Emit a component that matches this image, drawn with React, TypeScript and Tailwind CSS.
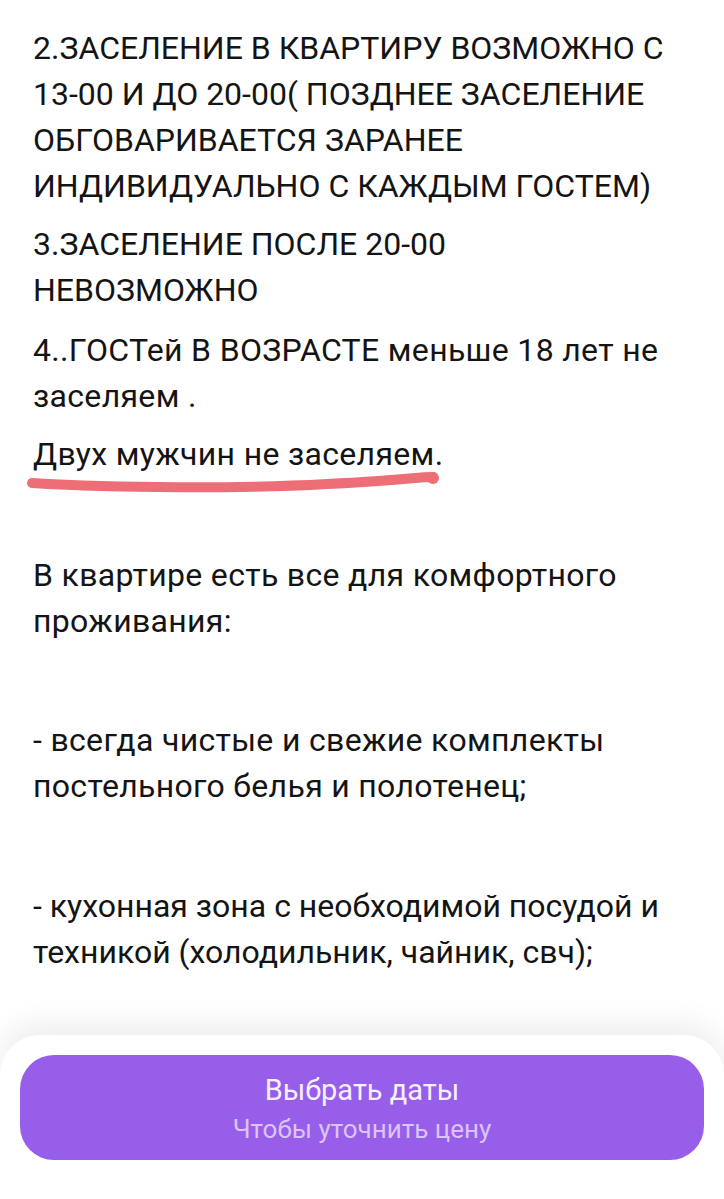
import type { ReactNode } from 'react';

function Para({ lines, className = '' }: { lines: string[]; className?: string }) {
  return (
    <p className={`whitespace-nowrap ${className}`}>
      {lines.map((line) => (
        <span key={line} className="block">
          {line}
        </span>
      ))}
    </p>
  );
}

function Marked({ children }: { children: ReactNode }) {
  // hand-drawn marker stroke under the line
  return (
    <div className="relative mt-3">
      {children}
      <svg
        className="pointer-events-none absolute left-[-6px] top-[38px]"
        width="424"
        height="26"
        viewBox="0 0 424 26"
        fill="none"
      >
        <path
          d="M5 14 C 90 19, 210 20, 300 15 S 388 8, 406 8"
          stroke="#ee6e77"
          strokeWidth="10"
          strokeLinecap="round"
        />
        <circle cx="406" cy="9" r="6" fill="#ee6e77" />
      </svg>
    </div>
  );
}

export default function App() {
  return (
    <div className="flex min-h-screen flex-col bg-white font-['Roboto',sans-serif]">
      <div className="px-[33px] pt-[25px] text-[32px] leading-[46px] text-[#141414]">
        <Para
          lines={[
            '2.ЗАСЕЛЕНИЕ В КВАРТИРУ ВОЗМОЖНО С',
            '13-00 И ДО 20-00( ПОЗДНЕЕ ЗАСЕЛЕНИЕ',
            'ОБГОВАРИВАЕТСЯ ЗАРАНЕЕ',
            'ИНДИВИДУАЛЬНО С КАЖДЫМ ГОСТЕМ)',
          ]}
        />
        <Para className="mt-3" lines={['3.ЗАСЕЛЕНИЕ ПОСЛЕ 20-00', 'НЕВОЗМОЖНО']} />
        <Para
          className="mt-[14px] tracking-[0.01em]"
          lines={['4..ГОСТей В ВОЗРАСТЕ меньше 18 лет не', 'заселяем .']}
        />
        <Marked>
          <Para className="tracking-[0.01em]" lines={['Двух мужчин не заселяем.']} />
        </Marked>
        <Para
          className="mt-[75px] tracking-[0.01em]"
          lines={['В квартире есть все для комфортного', 'проживания:']}
        />
        <Para
          className="mt-[73px] tracking-[0.01em]"
          lines={['- всегда чистые и свежие комплекты', 'постельного белья и полотенец;']}
        />
        <Para
          className="mt-[74px]"
          lines={['- кухонная зона с необходимой посудой и', 'техникой (холодильник, чайник, свч);']}
        />
      </div>

      <div className="mt-auto rounded-t-[40px] bg-white px-5 pb-[39px] pt-5 shadow-[0_-12px_30px_rgba(0,0,0,0.07)]">
        <button className="flex h-[105px] w-full flex-col items-center justify-center rounded-[34px] bg-[#975fe9] font-['Roboto',sans-serif]">
          <span className="text-[29px] leading-[36px] text-[#f7f1ff]">Выбрать даты</span>
          <span className="mt-[6px] text-[26px] leading-[30px] text-[#dcc3f8]">Чтобы уточнить цену</span>
        </button>
      </div>
    </div>
  );
}
